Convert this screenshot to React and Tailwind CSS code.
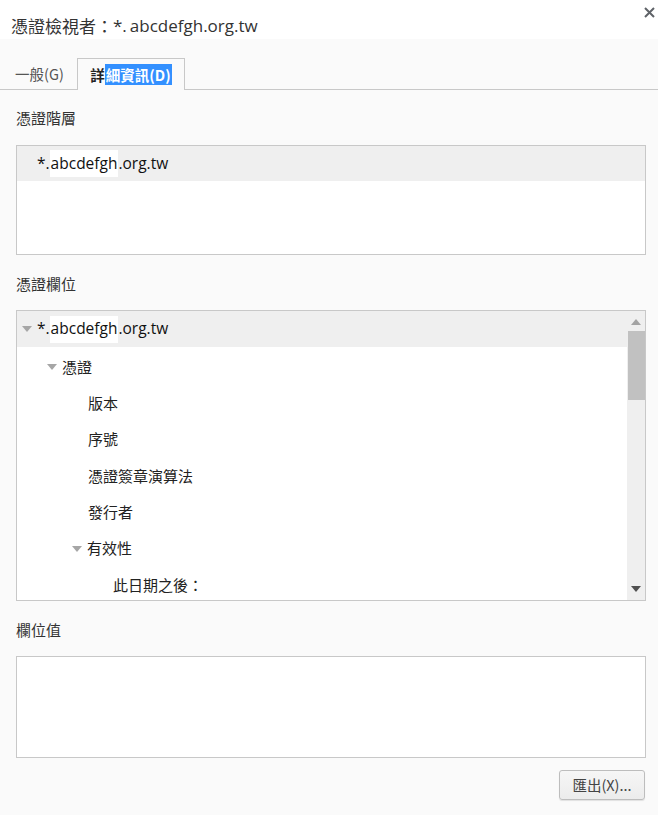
import React from "react";

const CJK = { fontFamily: '"Noto Sans CJK TC", "Noto Sans", sans-serif' };
const LAT = { fontFamily: '"Open Sans", "Noto Sans CJK TC", sans-serif' };

function Tri() {
  return (
    <svg width="10" height="6" viewBox="0 0 10 6">
      <path d="M0 0 L10 0 L5 6 Z" fill="#a6a6a6" />
    </svg>
  );
}

function Domain() {
  return (
    <span className="flex items-center text-[15.5px] text-[#111]" style={LAT}>
      <span>*.</span>
      <span className="bg-white px-[1px] h-[27px] flex items-center">abcdefgh</span>
      <span>.org.tw</span>
    </span>
  );
}

function Row({ indent, tri, children, hl }) {
  return (
    <div
      className={`flex items-center shrink-0 ${hl ? "bg-[#efefef] h-[36px] mb-[2px]" : "h-[36.3px]"}`}
      style={{ paddingLeft: indent }}
    >
      <div className="w-[15px] flex items-center">{tri && <Tri />}</div>
      {children}
    </div>
  );
}

function T({ children }) {
  return (
    <span className="text-[15px] text-[#222]" style={CJK}>
      {children}
    </span>
  );
}

export default function App() {
  return (
    <div className="w-[658px] h-[815px] bg-[#fafafa] flex flex-col" style={CJK}>
      <div className="h-[39px] bg-white flex items-start justify-between pl-[11px] pr-[3px]">
        <div className="flex items-center mt-[13px] text-[17px] text-[#333]">
          <span style={CJK} className="text-[17px]">憑證檢視者：</span>
          <span style={LAT} className="flex items-center">
            <span>*.</span>
            <span className="ml-[3px]">abcdefgh.org.tw</span>
          </span>
        </div>
        <svg width="11" height="11" viewBox="0 0 11 11" className="mt-[7px]">
          <path d="M1 1 L10 10 M10 1 L1 10" stroke="#5f6368" strokeWidth="2" />
        </svg>
      </div>

      <div className="mt-[19px] flex border-b border-[#c8c8c8] h-[32px] items-end">
        <div className="w-[77px] h-[31px] flex items-center justify-center pl-[2px] text-[14.5px] text-[#555]">
          一般(G)
        </div>
        <div className="w-[108px] h-[32px] -mb-px border border-b-0 border-[#c8c8c8] bg-[#fafafa] flex items-center justify-center text-[14.5px] font-bold text-[#222]">
          <span>詳</span>
          <span className="bg-[#3390ff] text-white px-[1px]">細資訊(D)</span>
        </div>
      </div>

      <div className="pl-[16px] pr-[12px] flex flex-col">
        <div className="mt-[18px] h-[20px] flex items-center text-[15px] text-[#333]">憑證階層</div>
        <div className="mt-[17px] h-[110px] border border-[#c8c8c8] bg-white">
          <div className="h-[35px] bg-[#efefef] flex items-center pl-[20px]">
            <Domain />
          </div>
        </div>

        <div className="mt-[19px] h-[20px] flex items-center text-[15px] text-[#333]">憑證欄位</div>
        <div className="mt-[16px] h-[291px] border border-[#c8c8c8] bg-white flex overflow-hidden">
          <div className="flex-1 flex flex-col">
            <Row indent={5} tri hl>
              <Domain />
            </Row>
            <Row indent={30} tri>
              <T>憑證</T>
            </Row>
            <Row indent={56}>
              <T>版本</T>
            </Row>
            <Row indent={56}>
              <T>序號</T>
            </Row>
            <Row indent={56}>
              <T>憑證簽章演算法</T>
            </Row>
            <Row indent={56}>
              <T>發行者</T>
            </Row>
            <Row indent={55} tri>
              <T>有效性</T>
            </Row>
            <Row indent={81}>
              <T>此日期之後：</T>
            </Row>
          </div>
          <div className="w-[18px] bg-[#efefef] flex flex-col items-center">
            <svg width="10" height="6" viewBox="0 0 10 6" className="mt-[8px]">
              <path d="M0 6 L10 6 L5 0 Z" fill="#a3a3a3" />
            </svg>
            <div className="mt-[6px] w-[17px] h-[69px] bg-[#c1c1c1]" />
            <div className="flex-1" />
            <svg width="10" height="6" viewBox="0 0 10 6" className="mb-[8px]">
              <path d="M0 0 L10 0 L5 6 Z" fill="#505050" />
            </svg>
          </div>
        </div>

        <div className="mt-[19px] h-[20px] flex items-center text-[15px] text-[#333]">欄位值</div>
        <div className="mt-[16px] h-[102px] border border-[#c8c8c8] bg-white" />

        <div className="mt-[12px] flex justify-end pr-[1px]">
          <button className="w-[86px] h-[30px] rounded-[3px] border border-[#bdbdbd] bg-gradient-to-b from-[#f6f6f6] to-[#ececec] shadow-[0_1px_1px_rgba(0,0,0,0.1)] text-[14.5px] text-[#444]" style={CJK}>
            匯出(X)...
          </button>
        </div>
      </div>
    </div>
  );
}
